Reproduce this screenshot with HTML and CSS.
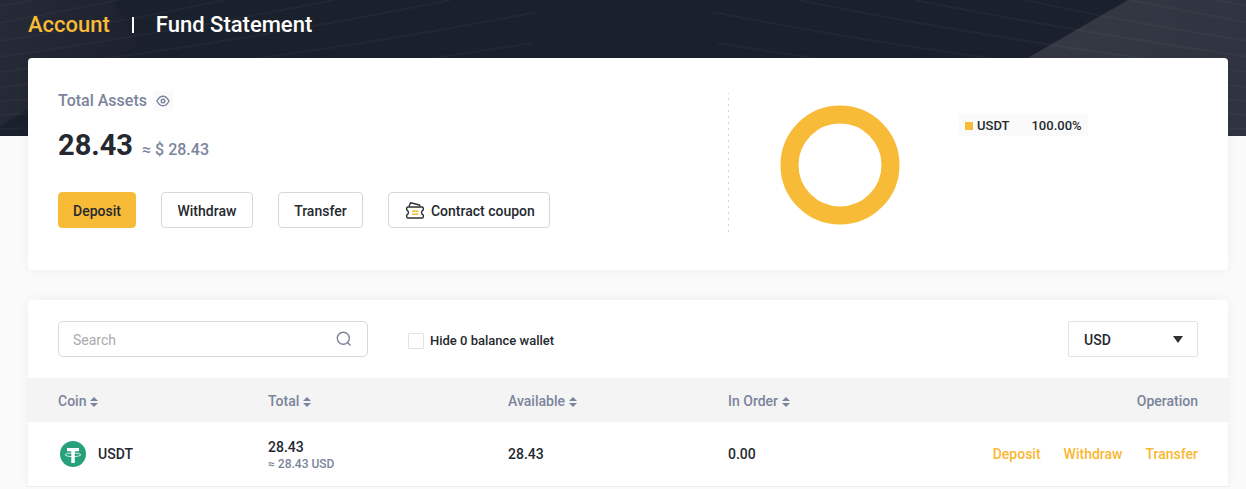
FILE: index.html
```html
<!DOCTYPE html>
<html lang="en">
<head>
<meta charset="utf-8">
<title>Account</title>
<link rel="stylesheet" href="styles.css">
</head>
<body>
<svg class="banner" viewBox="0 0 1246 136" preserveAspectRatio="none" aria-hidden="true">
  <defs>
    <linearGradient id="left-facet" x1="0" y1="0" x2="1" y2="0"><stop offset="0" stop-color="#262a36"/><stop offset="1" stop-color="#1e222e"/></linearGradient>
    <linearGradient id="right-facet" x1="0" y1="0" x2="1" y2="0"><stop offset="0" stop-color="#3b3d48"/><stop offset="1" stop-color="#2f3440"/></linearGradient>
    <g id="rays" fill="none" stroke="#fff" stroke-opacity=".03" stroke-width="2">
      <path d="M712 12Q980 64 1249 87M717 43Q980 86 1249 101M746 73Q990 104 1249 115M760 100Q1000 122 1249 129M798 0Q1010 43 1249 72M915 0Q1060 29 1249 57M1025 0Q1120 21 1249 41M1130 0L1249 23M1215 0L1249 6"/>
      <path stroke-width="1" stroke-opacity=".02" d="M990 0L976 28M1024 0L982 58M1048 0L1008 58M1060 0L1022 58M1100 0L1064 58"/>
    </g>
  </defs>
  <rect width="1246" height="136" fill="#1b202d"/>
  <path fill="url(#left-facet)" d="M0 0H112L138 45L0 126Z"/>
  <path fill="url(#right-facet)" d="M1128 0H1246V136H893Z"/>
  <use href="#rays"/>
  <use href="#rays" transform="translate(1249 0) scale(-1 1)"/>
</svg>
<div class="page">
  <nav class="tabs">
    <a class="tab tab-active" href="#account">Account</a>
    <span class="tab-divider"></span>
    <a class="tab" href="#statement">Fund Statement</a>
  </nav>

  <main class="content">
    <section class="card summary">
      <div class="totals">
        <div class="totals-head">
          <h1 class="totals-label">Total Assets</h1>
          <button class="eye" type="button" aria-label="Toggle balance">
            <svg width="14" height="12" viewBox="0 0 14 12" fill="none" stroke="#7b849b" stroke-width="1.4"><path d="M1 6Q3.400 1.200 7 1.200T13 6Q10.600 10.800 7 10.800T1 6Z"/><circle cx="7" cy="6" r="1.800"/></svg>
          </button>
        </div>
        <p class="amount"><strong class="amount-main">28.43</strong><span class="amount-fiat">≈ $ 28.43</span></p>
        <div class="actions">
          <button class="btn btn-primary" type="button">Deposit</button>
          <button class="btn btn-withdraw" type="button">Withdraw</button>
          <button class="btn btn-transfer" type="button">Transfer</button>
          <button class="btn btn-coupon" type="button">
            <svg width="20" height="20" viewBox="0 0 20 20" fill="none" stroke="#2d3036" stroke-width="1.400" stroke-linejoin="round"><path d="M3 6H17Q18.300 6 18.300 7.300V8.800Q16.500 10 16.500 11.500T18.300 14.200V15.700Q18.300 17 17 17H3Q1.700 17 1.700 15.700V14.200Q3.500 13 3.500 11.500T1.700 8.800V7.300Q1.700 6 3 6Z"/><path d="M4 5.500L5.500 1.700L14.500 4L15 5.500"/><path stroke="#f8bb37" d="M7 10.200H13.500M7 13.300H13.500"/></svg>
            Contract coupon
          </button>
        </div>
      </div>
      <svg class="dots" width="1" height="142" aria-hidden="true"><path d="M.5 0V142" stroke="#d4d5d8" stroke-dasharray="2 4" stroke-dashoffset="1"/></svg>
      <div class="chart">
        <svg width="120" height="120" viewBox="0 0 120 120" role="img" aria-label="USDT share"><circle cx="60" cy="60" r="50.500" fill="none" stroke="#f8bb37" stroke-width="18"/></svg>
        <div class="legend"><span class="swatch"></span><span class="legend-name">USDT</span><span>100.00%</span></div>
      </div>
    </section>

    <section class="card wallets">
      <div class="toolbar">
        <div class="search">
          <input class="search-input" type="text" placeholder="Search" aria-label="Search">
          <svg width="16" height="16" viewBox="0 0 16 16" fill="none" stroke="#7b849b" stroke-width="1.400"><circle cx="7.300" cy="7.300" r="6"/><path d="M11.500 11.500L14.500 14.500"/></svg>
        </div>
        <label class="hide-zero"><input class="check" type="checkbox">Hide 0 balance wallet</label>
        <select class="currency" aria-label="Currency"><option>USD</option></select>
      </div>
      <table class="table">
        <thead>
          <tr>
            <th class="col-coin">Coin<svg class="sort" width="8" height="10" viewBox="0 0 8 10"><path d="M0 4L4 0L8 4ZM0 6H8L4 10Z"/></svg></th>
            <th class="col-total">Total<svg class="sort" width="8" height="10" viewBox="0 0 8 10"><path d="M0 4L4 0L8 4ZM0 6H8L4 10Z"/></svg></th>
            <th class="col-available">Available<svg class="sort" width="8" height="10" viewBox="0 0 8 10"><path d="M0 4L4 0L8 4ZM0 6H8L4 10Z"/></svg></th>
            <th>In Order<svg class="sort" width="8" height="10" viewBox="0 0 8 10"><path d="M0 4L4 0L8 4ZM0 6H8L4 10Z"/></svg></th>
            <th class="col-ops">Operation</th>
          </tr>
        </thead>
        <tbody>
          <tr>
            <td class="col-coin">
              <div class="coin">
                <svg width="26" height="26" viewBox="0 0 26 26" aria-hidden="true"><circle cx="13" cy="13" r="13" fill="#26a17b"/><path fill="#fff" d="M7 7H19V10.200H14.800V22H11.300V10.200H7Z"/><ellipse cx="13" cy="13.800" rx="7.800" ry="1.800" fill="none" stroke="#fff" stroke-width=".8"/></svg>
                USDT
              </div>
            </td>
            <td>28.43<div class="sub">≈ 28.43 USD</div></td>
            <td>28.43</td>
            <td>0.00</td>
            <td class="col-ops">
              <div class="ops"><a class="op" href="#deposit">Deposit</a><a class="op" href="#withdraw">Withdraw</a><a class="op" href="#transfer">Transfer</a></div>
            </td>
          </tr>
        </tbody>
      </table>
    </section>
  </main>
</div>
</body>
</html>
```
FILE: styles.css
```css
* { box-sizing: border-box; }
body {
  margin: 0;
  background: #fafafa;
  color: #25292f;
  font: 500 14px/20px Roboto, "Liberation Sans", sans-serif;
  overflow: hidden;
}
button, input, select { font: inherit; color: inherit; }
a { text-decoration: none; }

.banner { position: absolute; top: 0; left: 0; width: 100%; height: 136px; }
.page { position: relative; padding: 0 18px 0 28px; }
.tabs { display: flex; align-items: center; gap: 22px; height: 58px; padding-bottom: 8px; }
.tab { font-size: 22px; line-height: 32px; color: #fff; }
.tab-active { color: #f8bb37; }
.tab-divider { width: 2px; height: 16px; background: #fff; }

.content { display: grid; gap: 30px; }
.card { background: #fff; border-radius: 4px; box-shadow: 0 0 12px rgba(0, 0, 0, .05); }

.summary { display: flex; align-items: flex-start; padding: 32px 30px 35px; }
.totals { flex: 0 0 670px; }
.totals-head { display: flex; align-items: center; gap: 6px; }
.totals-label { margin: 0; font-size: 16px; line-height: 22px; font-weight: 500; color: #7b849b; }
.eye { display: grid; place-items: center; width: 20px; height: 20px; padding: 0; border: 0; border-radius: 2px; background: #fafafa; }
.amount { display: flex; align-items: baseline; gap: 9px; margin: 13px 0 22px; line-height: 40px; }
.amount-main { font-size: 29px; font-weight: 700; }
.amount-fiat { font-size: 16px; color: #7b849b; }
.actions { display: flex; gap: 25px; }
.btn { display: flex; align-items: center; justify-content: center; height: 36px; padding: 2px 14px 0; border: 1px solid #d8d8da; border-radius: 4px; background: #fff; white-space: nowrap; }
.btn-primary { border-color: #f8bb37; background: #f8bb37; }
.btn-withdraw { min-width: 92px; }
.btn-transfer { min-width: 85px; }
.btn-coupon { gap: 6px; padding: 2px 14px 0 16px; }
.dots { margin-top: 3px; }
.chart { display: flex; align-items: flex-start; gap: 59px; padding: 15px 0 0 51px; }
.legend { display: flex; align-items: center; height: 22px; margin-top: 9px; padding: 2px 6px 0; border-radius: 2px; background: #fafafa; font-size: 13px; }
.swatch { width: 8px; height: 8px; margin-right: 4px; background: #f8bb37; }
.legend-name { margin-right: 22px; }

.toolbar { display: flex; align-items: center; padding: 21px 30px; }
.search { display: flex; align-items: center; width: 310px; height: 36px; padding: 0 15px 0 14px; border: 1px solid #d8d8e0; border-radius: 5px; }
.search-input { flex: 1; min-width: 0; padding: 2px 0 0; border: 0; outline: 0; background: none; font-weight: 400; }
.search-input::placeholder { color: #a9a9ab; }
.hide-zero { display: flex; align-items: center; gap: 6px; margin-left: 40px; padding-top: 4px; font-size: 13px; }
.check { appearance: none; width: 16px; height: 16px; margin: 0; border: 1px solid #e2e2e4; border-radius: 1px; background: #fff; }
.check:checked { background: #f8bb37; }
.currency {
  appearance: none; width: 130px; height: 36px; margin-left: auto; padding: 2px 15px 0; border: 1px solid #e3e3e5; border-radius: 2px;
  background: #fff url("data:image/svg+xml,%3Csvg xmlns='http://www.w3.org/2000/svg' width='10' height='7'%3E%3Cpath d='M0 0H10L5 7Z' fill='%23303030'/%3E%3C/svg%3E") no-repeat right 14px center;
}

.table { width: 100%; border-spacing: 0; table-layout: fixed; }
.table th { height: 44px; padding: 2px 0 0; background: #f4f4f4; color: #7b849b; font-weight: 500; text-align: left; }
.table td { height: 65px; padding: 0; border-bottom: 1px solid #ededf0; }
.table .col-coin { width: 240px; padding-left: 30px; }
.col-total { width: 240px; }
.col-available { width: 220px; }
.table .col-ops { padding-right: 30px; text-align: right; }
.sort { margin-left: 4px; vertical-align: -1px; fill: #7b849b; }
.coin { display: flex; align-items: center; gap: 12px; padding-left: 2px; }
.sub { font-size: 12px; line-height: 14px; color: #7b849b; }
.ops { display: flex; justify-content: flex-end; gap: 23px; }
.op { color: #fab731; }
```
